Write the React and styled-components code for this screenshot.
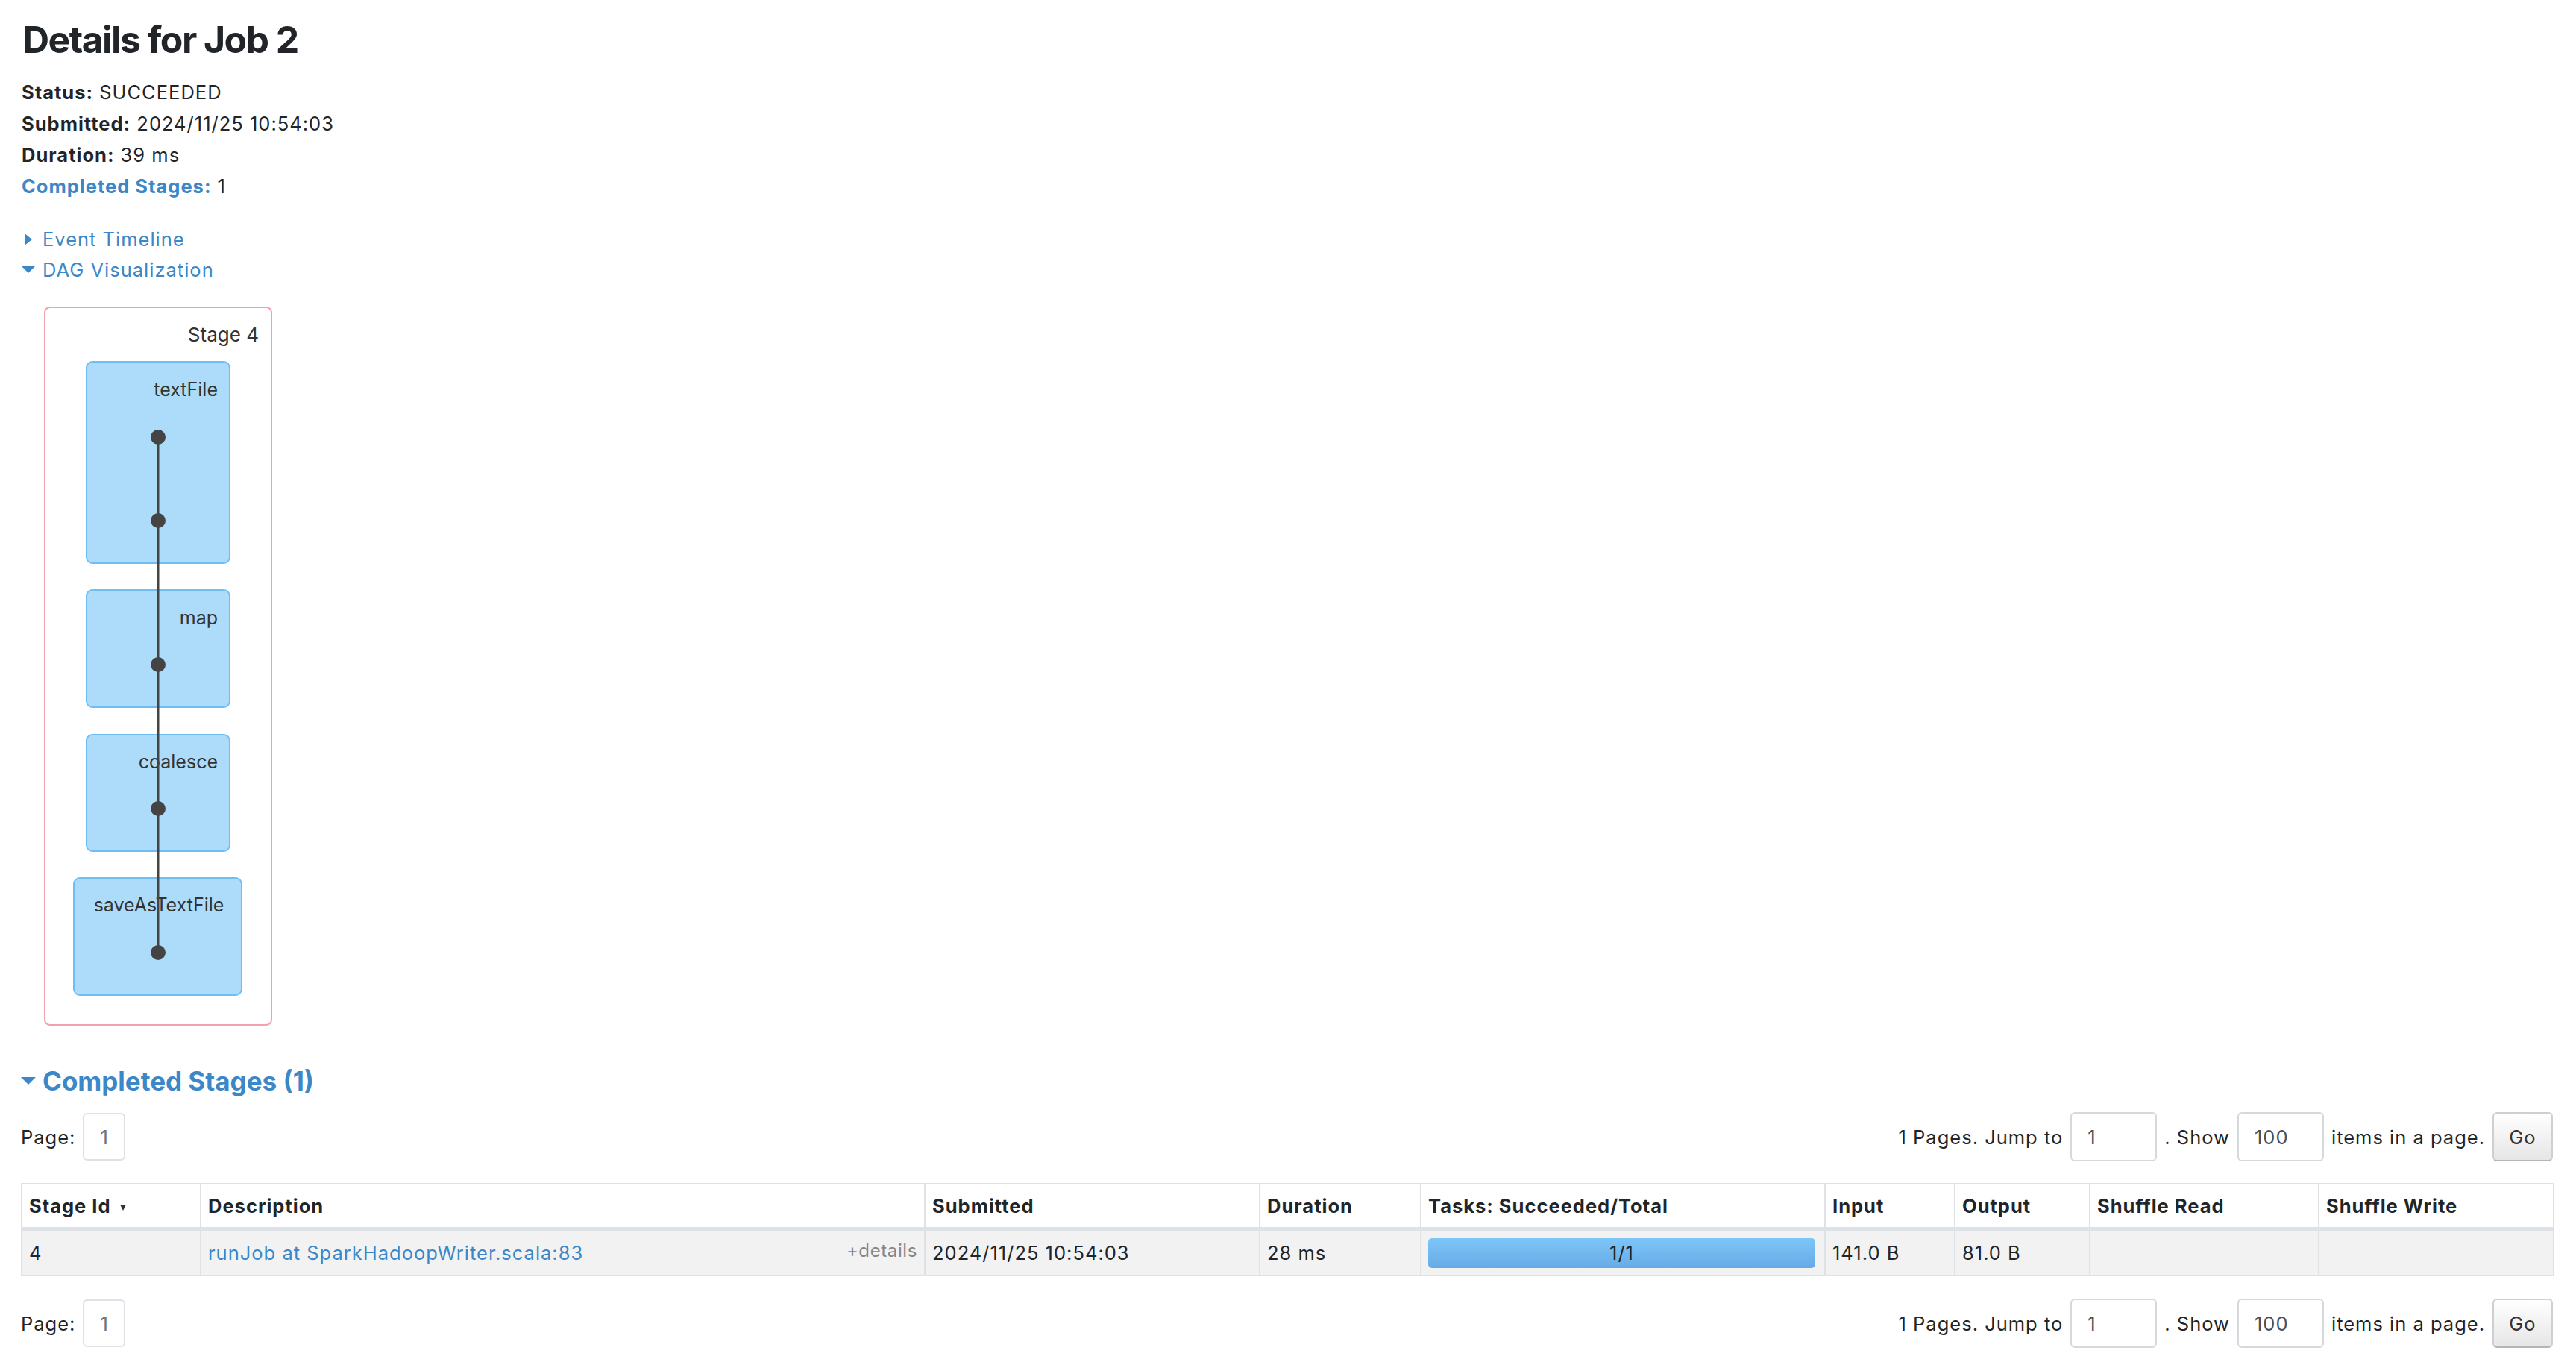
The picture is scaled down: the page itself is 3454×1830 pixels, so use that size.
import React from 'react';
import styled, { createGlobalStyle } from 'styled-components';

const GlobalStyle = createGlobalStyle`
  html, body {
    margin: 0;
    padding: 0;
    background: #ffffff;
  }
  body {
    font-family: Inter, "Noto Sans", "Liberation Sans", sans-serif;
    color: #212529;
    font-size: 25.5px;
    letter-spacing: 1px;
  }
`;

const BLUE = '#3b87c7';

const Page = styled.div`
  padding: 0 31px 0 28px;
`;

const Title = styled.h3`
  margin: 23px 0 20px 2px;
  font-size: 50px;
  line-height: 60px;
  font-weight: 700;
  letter-spacing: -1.6px;
  color: #212529;
`;

const Summary = styled.ul`
  list-style: none;
  margin: 0;
  padding: 0 0 0 1px;
`;

const SummaryItem = styled.li`
  line-height: 42px;
`;

const Label = styled.strong`
  font-weight: 700;
  color: ${p => (p.$link ? BLUE : '#212529')};
`;

const Toggles = styled.div`
  margin-top: 29px;
`;

const ToggleRow = styled.div`
  display: flex;
  align-items: center;
  line-height: 41px;
  color: ${BLUE};
`;

const ArrowBox = styled.span`
  display: inline-flex;
  justify-content: center;
  align-items: center;
  width: ${p => (p.$big ? '20px' : '19px')};
  margin-right: ${p => (p.$big ? '9px' : '10px')};
`;

const Arrow = styled.span`
  width: 0;
  height: 0;
  ${p =>
    p.$open
      ? `border-left: ${p.$size / 2}px solid transparent;
         border-right: ${p.$size / 2}px solid transparent;
         border-top: ${p.$size / 2}px solid ${BLUE};`
      : `border-top: 8px solid transparent;
         border-bottom: 8px solid transparent;
         border-left: 10px solid ${BLUE};`}
`;

const DagWrap = styled.div`
  margin-top: 17px;
  height: 990px;
  letter-spacing: 0;
`;

const SectionHeader = styled.h4`
  display: flex;
  align-items: center;
  margin: 39px 0 0 0;
  font-size: 35px;
  line-height: 42px;
  font-weight: 700;
  letter-spacing: 0;
  color: ${BLUE};
`;

const NavRow = styled.div`
  display: flex;
  justify-content: space-between;
  align-items: center;
  height: 66px;
  margin-top: ${p => p.$top}px;
`;

const NavGroup = styled.div`
  display: flex;
  align-items: center;
  gap: 10px;
  color: #212529;
`;

const PageBox = styled.span`
  display: inline-flex;
  align-items: center;
  box-sizing: border-box;
  height: 64px;
  width: 57px;
  padding-left: 21px;
  border: 2px solid #dee2e6;
  border-radius: 6px;
  color: #6c757d;
`;

const NumInput = styled.span`
  display: inline-flex;
  align-items: center;
  box-sizing: border-box;
  height: 66px;
  width: 116px;
  padding-left: 21px;
  border: 2px solid #d5d9de;
  border-radius: 6px;
  color: #495057;
`;

const GoButton = styled.button`
  box-sizing: border-box;
  height: 66px;
  width: 81px;
  font-family: inherit;
  font-size: 25.5px;
  letter-spacing: 1px;
  color: #333;
  border: 2px solid #cfcfcf;
  border-bottom-color: #b5b5b5;
  border-radius: 6px;
  background: linear-gradient(to bottom, #ffffff 0%, #e6e6e6 100%);
  padding: 0;
`;

const Table = styled.table`
  width: 3395px;
  margin-top: 29px;
  border-collapse: collapse;
  table-layout: fixed;
  border: 2px solid #dee2e6;
`;

const Th = styled.th`
  text-align: left;
  font-weight: 700;
  padding: 9.5px 9px;
  line-height: 38px;
  border: 2px solid #dee2e6;
  border-bottom: 5px solid #dee2e6;
  color: #212529;
  white-space: nowrap;
`;

const Td = styled.td`
  padding: 9.5px 9px;
  line-height: 38px;
  border: 2px solid #dee2e6;
  background: #f2f2f2;
  color: #212529;
  white-space: nowrap;
  vertical-align: middle;
`;

const SortArrow = styled.span`
  display: inline-block;
  width: 0;
  height: 0;
  margin-left: 12px;
  vertical-align: middle;
  border-left: 4px solid transparent;
  border-right: 4px solid transparent;
  border-top: 8px solid #333;
`;

const DescLink = styled.a`
  color: ${BLUE};
  text-decoration: none;
`;

const Details = styled.span`
  float: right;
  font-size: 24px;
  letter-spacing: 0.6px;
  color: #868686;
  line-height: 32px;
`;

const Progress = styled.div`
  height: 40px;
  border-radius: 5px;
  background: linear-gradient(to bottom, #7dc6f8 0%, #67aae6 100%);
  display: flex;
  align-items: center;
  justify-content: center;
  color: #212529;
  margin-right: 3px;
`;

const nodes = [
  { label: 'textFile', x: 88, y: 86, w: 192, h: 270, lx: 264, ly: 132, anchor: 'end' },
  { label: 'map', x: 88, y: 392, w: 192, h: 157, lx: 264, ly: 438, anchor: 'end' },
  { label: 'coalesce', x: 88, y: 586, w: 192, h: 156, lx: 264, ly: 631, anchor: 'end' },
  { label: 'saveAsTextFile', x: 71, y: 778, w: 225, h: 157, lx: 185, ly: 823, anchor: 'middle' },
];

const dots = [187, 299, 492, 685, 878];

const DagGraph = () => (
  <svg width="400" height="990" viewBox="0 0 400 990">
    <rect x="32" y="13" width="304" height="962" rx="7" fill="#fff" stroke="#f0a3ad" strokeWidth="2" />
    <text x="319" y="59" textAnchor="end" fontSize="26" fill="#333" fontFamily="Inter, sans-serif">
      Stage 4
    </text>
    {nodes.map(n => (
      <g key={n.label}>
        <rect x={n.x} y={n.y} width={n.w} height={n.h} rx="8" fill="#addcfa" stroke="#6fbdf4" strokeWidth="2" />
        <text x={n.lx} y={n.ly} textAnchor={n.anchor} fontSize="25" fill="#333" fontFamily="Inter, sans-serif">
          {n.label}
        </text>
      </g>
    ))}
    <line x1="184" y1={dots[0]} x2="184" y2={dots[dots.length - 1]} stroke="#444" strokeWidth="3" />
    {dots.map(d => (
      <circle key={d} cx="184" cy={d} r="10" fill="#444" />
    ))}
  </svg>
);

const Pagination = ({ top }) => (
  <NavRow $top={top}>
    <NavGroup>
      <span>Page:</span>
      <PageBox>1</PageBox>
    </NavGroup>
    <NavGroup>
      <span>1 Pages. Jump to</span>
      <NumInput>1</NumInput>
      <span>. Show</span>
      <NumInput>100</NumInput>
      <span>items in a page.</span>
      <GoButton>Go</GoButton>
    </NavGroup>
  </NavRow>
);

const columns = [
  ['Stage Id', 240],
  ['Description', 971],
  ['Submitted', 449],
  ['Duration', 216],
  ['Tasks: Succeeded/Total', 542],
  ['Input', 174],
  ['Output', 181],
  ['Shuffle Read', 307],
  ['Shuffle Write', 315],
];

export default function App() {
  return (
    <>
      <GlobalStyle />
      <Page>
        <Title>Details for Job 2</Title>
        <Summary>
          <SummaryItem><Label>Status:</Label> SUCCEEDED</SummaryItem>
          <SummaryItem><Label>Submitted:</Label> 2024/11/25 10:54:03</SummaryItem>
          <SummaryItem><Label>Duration:</Label> 39 ms</SummaryItem>
          <SummaryItem><Label $link>Completed Stages:</Label> 1</SummaryItem>
        </Summary>

        <Toggles>
          <ToggleRow>
            <ArrowBox><Arrow /></ArrowBox>
            Event Timeline
          </ToggleRow>
          <ToggleRow>
            <ArrowBox><Arrow $open $size={18} /></ArrowBox>
            DAG Visualization
          </ToggleRow>
        </Toggles>

        <DagWrap>
          <DagGraph />
        </DagWrap>

        <SectionHeader>
          <ArrowBox $big><Arrow $open $size={20} /></ArrowBox>
          Completed Stages (1)
        </SectionHeader>

        <Pagination top={21} />

        <Table>
          <colgroup>
            {columns.map(([name, w]) => (
              <col key={name} style={{ width: w }} />
            ))}
          </colgroup>
          <thead>
            <tr>
              {columns.map(([name], i) => (
                <Th key={name}>
                  {name}
                  {i === 0 && <SortArrow />}
                </Th>
              ))}
            </tr>
          </thead>
          <tbody>
            <tr>
              <Td>4</Td>
              <Td>
                <DescLink href="#">runJob at SparkHadoopWriter.scala:83</DescLink>
                <Details>+details</Details>
              </Td>
              <Td>2024/11/25 10:54:03</Td>
              <Td>28 ms</Td>
              <Td>
                <Progress>1/1</Progress>
              </Td>
              <Td>141.0 B</Td>
              <Td>81.0 B</Td>
              <Td></Td>
              <Td></Td>
            </tr>
          </tbody>
        </Table>

        <Pagination top={30} />
      </Page>
    </>
  );
}
